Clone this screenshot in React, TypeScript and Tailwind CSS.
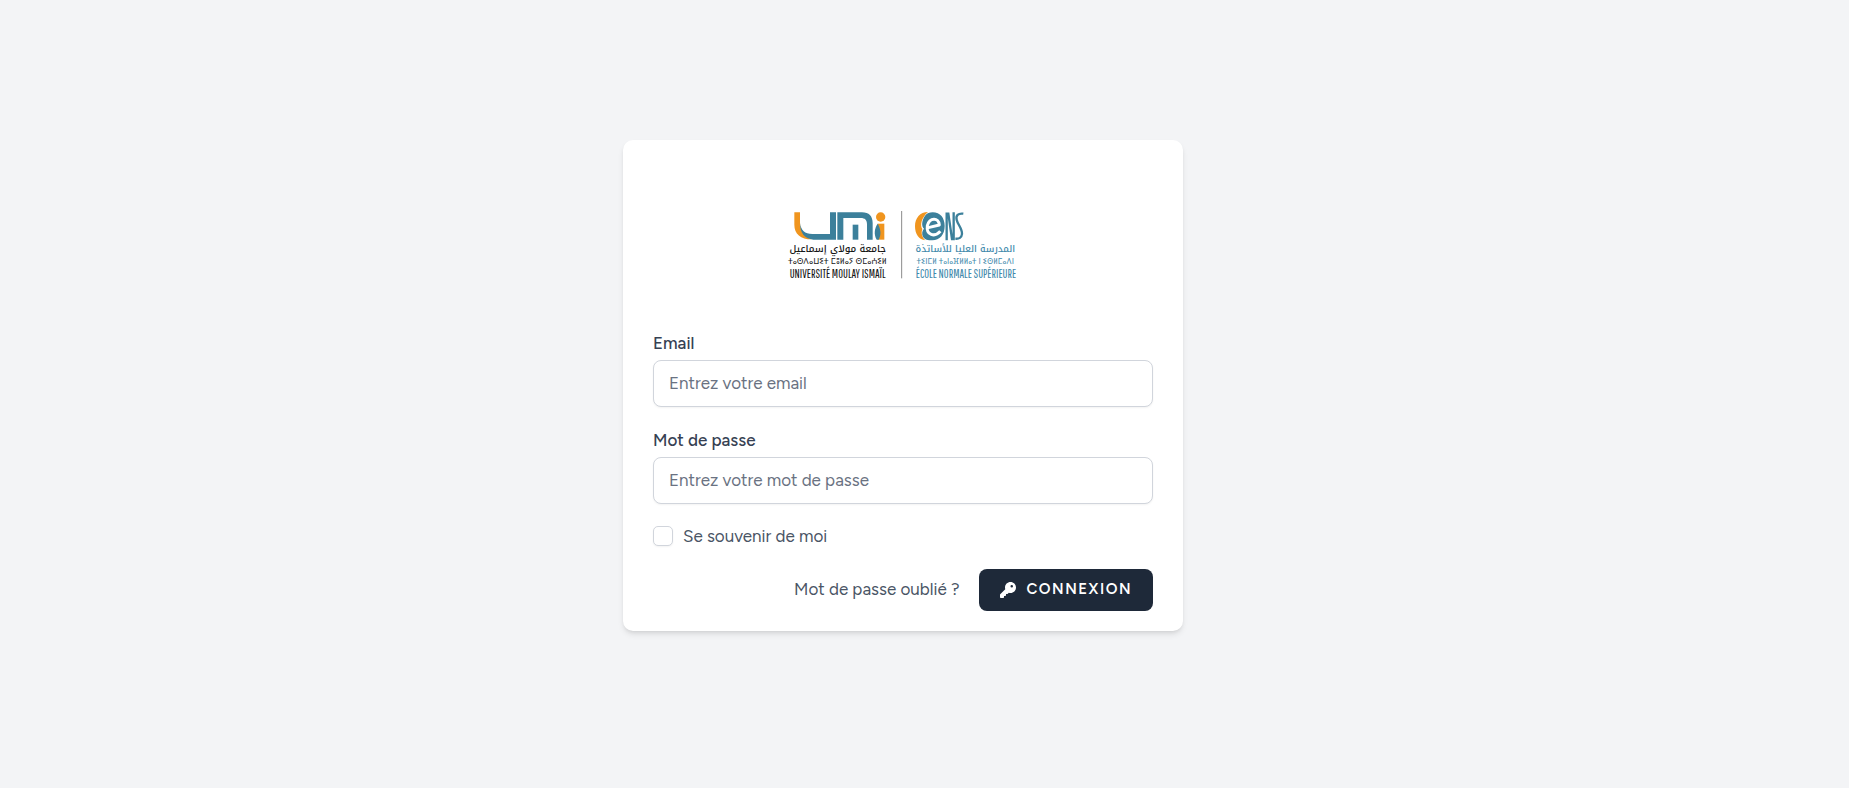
import type { InputHTMLAttributes } from "react";
import { FaKey } from "react-icons/fa6";

function Logo() {
  return (
    <svg
      viewBox="9 0 780 330"
      className="h-[110px] w-[260px]"
      role="img"
      aria-label="Université Moulay Ismaïl, École Normale Supérieure"
    >
      <g>
        <path d="M73 67H90V97C90 122 103 140 125 148C92 148 73 132 73 104Z" fill="#f0951f" />
        <path d="M90 100C93 121 104 132 127 132H180V67H198V149H130C103 147 90 128 90 100Z" fill="#3c809b" />
        <path d="M202 67H276C297 67 308 79 308 99V149H291V103C291 90 285 84 272 84H220V149H202Z" fill="#3c809b" />
        <path d="M248 104H265V149H248Z" fill="#3c809b" />
        <circle cx="332" cy="81" r="14" fill="#f0951f" />
        <path d="M323 101H343V149H323Z" fill="#f0951f" />
        <path d="M323 101C333 118 334 134 326 149H320C311 134 313 115 323 101Z" fill="#3c809b" />
      </g>
      <g className="fill-neutral-900" textAnchor="middle">
        <text x="203" y="186" fontSize="29" fontWeight="500" fontFamily="'Noto Kufi Arabic', 'DejaVu Sans', sans-serif">جامعة مولاي إسماعيل</text>
        <text x="202" y="222" fontSize="26" fontFamily="'Noto Sans Tifinagh', 'DejaVu Sans', sans-serif">ⵜⴰⵙⴷⴰⵡⵉⵜ ⵎⵓⵍⴰⵢ ⵙⵎⴰⵄⵉⵍ</text>
        <text x="203" y="265" fontSize="35" fontFamily="'Pathway Gothic One', 'DejaVu Sans Condensed', sans-serif">UNIVERSITÉ MOULAY ISMAÏL</text>
      </g>
      <path d="M395 63V265" stroke="#8a8a8a" strokeWidth="3" />
      <g>
        <path d="M474 66C450 66 435 84 435 109C435 133 447 149 466 151C455 140 453 128 457 117C449 106 455 82 474 66Z" fill="#f0951f" />
        <path d="M488 67C511 67 524 84 524 108C524 134 509 151 487 151C474 151 464 149 459 140C455 132 456 122 462 116C453 108 456 90 465 77C471 70 479 67 488 67Z" fill="#3c809b" />
        <path d="M475 113L508 105C506 82 479 82 472 107C468 135 494 143 511 124" fill="none" stroke="#fff" strokeWidth="9" strokeLinejoin="round" />
        <g fill="none" stroke="#3c809b" strokeWidth="7">
          <path d="M530 151V71H535L546 147H551V67" />
          <path d="M580 71C564 69 557 77 560 89C563 104 577 115 576 132C575 143 567 147 556 146" />
        </g>
      </g>
      <g fill="#4189ab" textAnchor="middle">
        <text x="586" y="186" fontSize="28" fontWeight="500" fontFamily="'Noto Kufi Arabic', 'DejaVu Sans', sans-serif">المدرسة العليا للأساتذة</text>
        <text x="586" y="222" fontSize="24" fontFamily="'Noto Sans Tifinagh', 'DejaVu Sans', sans-serif">ⵜⵉⵏⵎⵍ ⵜⴰⵏⴰⴼⵍⵍⴰⵜ ⵏ ⵉⵙⵍⵎⴰⴷⵏ</text>
        <text x="588" y="265" fontSize="35" fontFamily="'Pathway Gothic One', 'DejaVu Sans Condensed', sans-serif">ÉCOLE NORMALE SUPÉRIEURE</text>
      </g>
    </svg>
  );
}

type FieldProps = InputHTMLAttributes<HTMLInputElement> & { id: string; label: string };

function Field({ id, label, ...props }: FieldProps) {
  return (
    <div className="flex flex-col gap-1.5">
      <label htmlFor={id} className="leading-[22px] font-medium text-gray-700">
        {label}
      </label>
      <input
        id={id}
        name={id}
        className="h-[47px] w-full rounded-lg border border-gray-300 bg-white px-[15px] shadow-xs outline-none placeholder:text-gray-500 focus:border-indigo-500"
        {...props}
      />
    </div>
  );
}

export default function App() {
  return (
    <main className="flex min-h-screen items-center justify-center bg-[#f3f4f6] pr-[43px] pb-[18px] font-['Figtree','Lato',sans-serif] text-[17px] text-gray-600">
      <div className="w-full max-w-[560px] rounded-[10px] bg-white px-[30px] pt-[50px] pb-5 shadow-md">
        <div className="flex justify-center">
          <Logo />
        </div>
        <form className="mt-8 flex flex-col gap-[22px]" onSubmit={(e) => e.preventDefault()}>
          <Field id="email" label="Email" type="email" placeholder="Entrez votre email" />
          <Field id="password" label="Mot de passe" type="password" placeholder="Entrez votre mot de passe" />
          <label className="flex items-center gap-2.5 leading-[21px]">
            <input
              type="checkbox"
              name="remember"
              className="size-5 appearance-none rounded-[5px] border border-gray-300 bg-white shadow-xs checked:border-indigo-600 checked:bg-indigo-600"
            />
            Se souvenir de moi
          </label>
          <div className="flex items-center justify-end gap-5">
            <a href="#" className="hover:text-gray-900">
              Mot de passe oublié ?
            </a>
            <button
              type="submit"
              className="flex h-[42px] items-center gap-2.5 rounded-lg bg-gray-800 px-[21px] text-[15px] font-semibold tracking-widest text-white uppercase hover:bg-gray-700"
            >
              <FaKey className="size-4" aria-hidden="true" />
              Connexion
            </button>
          </div>
        </form>
      </div>
    </main>
  );
}
